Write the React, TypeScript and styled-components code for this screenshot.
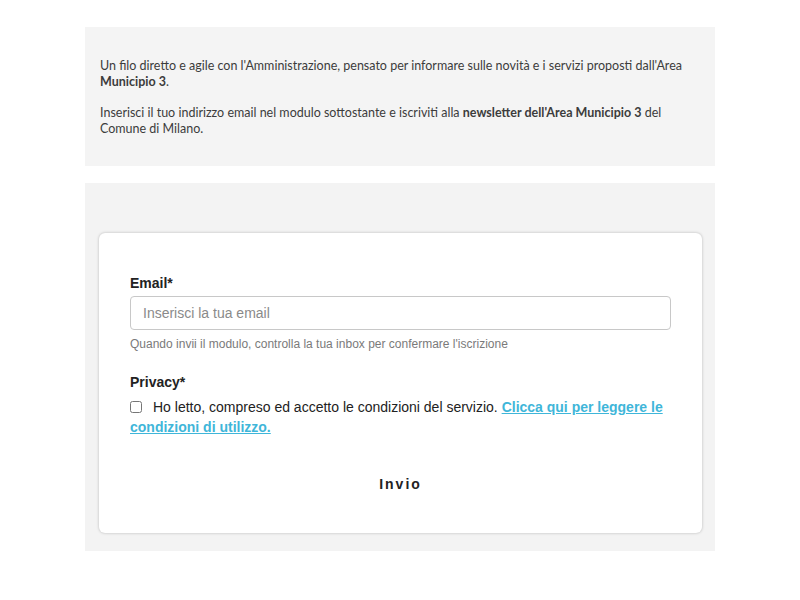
import React from "react";
import styled, { createGlobalStyle } from "styled-components";

const GlobalStyle = createGlobalStyle`
    html, body {
        margin: 0;
        padding: 0;
        background: #ffffff;
    }
    * {
        box-sizing: border-box;
    }
`;

const Page = styled.div`
    width: 800px;
    display: flex;
    flex-direction: column;
    align-items: center;
    padding-top: 27px;
`;

const IntroBox = styled.div`
    width: 630px;
    background-color: #f4f4f4;
    padding: 31px 15px 29px 15px;
    font-family: "Lato", "Open Sans", sans-serif;
    font-size: 12.5px;
    line-height: 16px;
    color: #3c3c3c;
`;

const IntroText = styled.p`
    margin: 0 0 15px 0;
    &:last-child {
        margin-bottom: 0;
    }
    b {
        font-weight: 700;
    }
`;

const FormSection = styled.div`
    width: 630px;
    margin-top: 17px;
    background-color: #f3f3f3;
    padding: 50px 13px 18px 14px;
`;

const Card = styled.form`
    background: #ffffff;
    border-radius: 6px;
    box-shadow: 0 0 3px rgba(0, 0, 0, 0.25);
    padding: 42px 31px 40px 31px;
    font-family: "Liberation Sans", Arial, sans-serif;
    color: #222222;
`;

const Field = styled.div`
    display: flex;
    flex-direction: column;
    margin-bottom: 23px;
`;

const Label = styled.label`
    font-size: 14px;
    font-weight: 700;
    line-height: 16px;
    margin-bottom: 5px;
`;

const TextInput = styled.input`
    width: 541px;
    height: 34px;
    border: 1px solid #c8c8c8;
    border-radius: 4px;
    padding: 0 12px;
    font-family: "Liberation Sans", Arial, sans-serif;
    font-size: 14px;
    color: #333;
    outline: none;
    &::placeholder {
        color: #8a8a8a;
    }
`;

const Help = styled.span`
    font-size: 12px;
    color: #7a7a7a;
    margin-top: 7px;
    line-height: 14px;
`;

const CheckRow = styled.div`
    font-size: 14px;
    line-height: 20px;
    color: #222;
    margin-top: 2px;
`;

const CheckBox = styled.input`
    width: 12px;
    height: 12px;
    margin: 0 11px 0 0;
    vertical-align: -1px;
`;

const Link = styled.a`
    color: #3fb6d9;
    font-weight: 700;
    text-decoration: underline;
`;

const Submit = styled.button`
    display: block;
    margin: 38px auto 0 auto;
    background: none;
    border: none;
    font-family: "Liberation Sans", Arial, sans-serif;
    font-size: 14px;
    font-weight: 700;
    letter-spacing: 2px;
    color: #222;
    cursor: pointer;
`;

export default function App() {
    return (
        <>
            <GlobalStyle />
            <Page>
                <IntroBox>
                    <IntroText>
                        Un filo diretto e agile con l'Amministrazione, pensato per informare sulle
                        novità e i servizi proposti dall'Area <b>Municipio 3</b>.
                    </IntroText>
                    <IntroText>
                        Inserisci il tuo indirizzo email nel modulo sottostante e iscriviti alla{" "}
                        <b>newsletter dell'Area Municipio 3</b> del Comune di Milano.
                    </IntroText>
                </IntroBox>
                <FormSection>
                    <Card onSubmit={(e) => e.preventDefault()}>
                        <Field>
                            <Label htmlFor="email">Email*</Label>
                            <TextInput id="email" type="email" placeholder="Inserisci la tua email" />
                            <Help>
                                Quando invii il modulo, controlla la tua inbox per confermare
                                l'iscrizione
                            </Help>
                        </Field>
                        <Field>
                            <Label>Privacy*</Label>
                            <CheckRow>
                                <CheckBox type="checkbox" />
                                Ho letto, compreso ed accetto le condizioni del servizio.{" "}
                                <Link href="#">
                                    Clicca qui per leggere le condizioni di utilizzo.
                                </Link>
                            </CheckRow>
                        </Field>
                        <Submit type="submit">Invio</Submit>
                    </Card>
                </FormSection>
            </Page>
        </>
    );
}
